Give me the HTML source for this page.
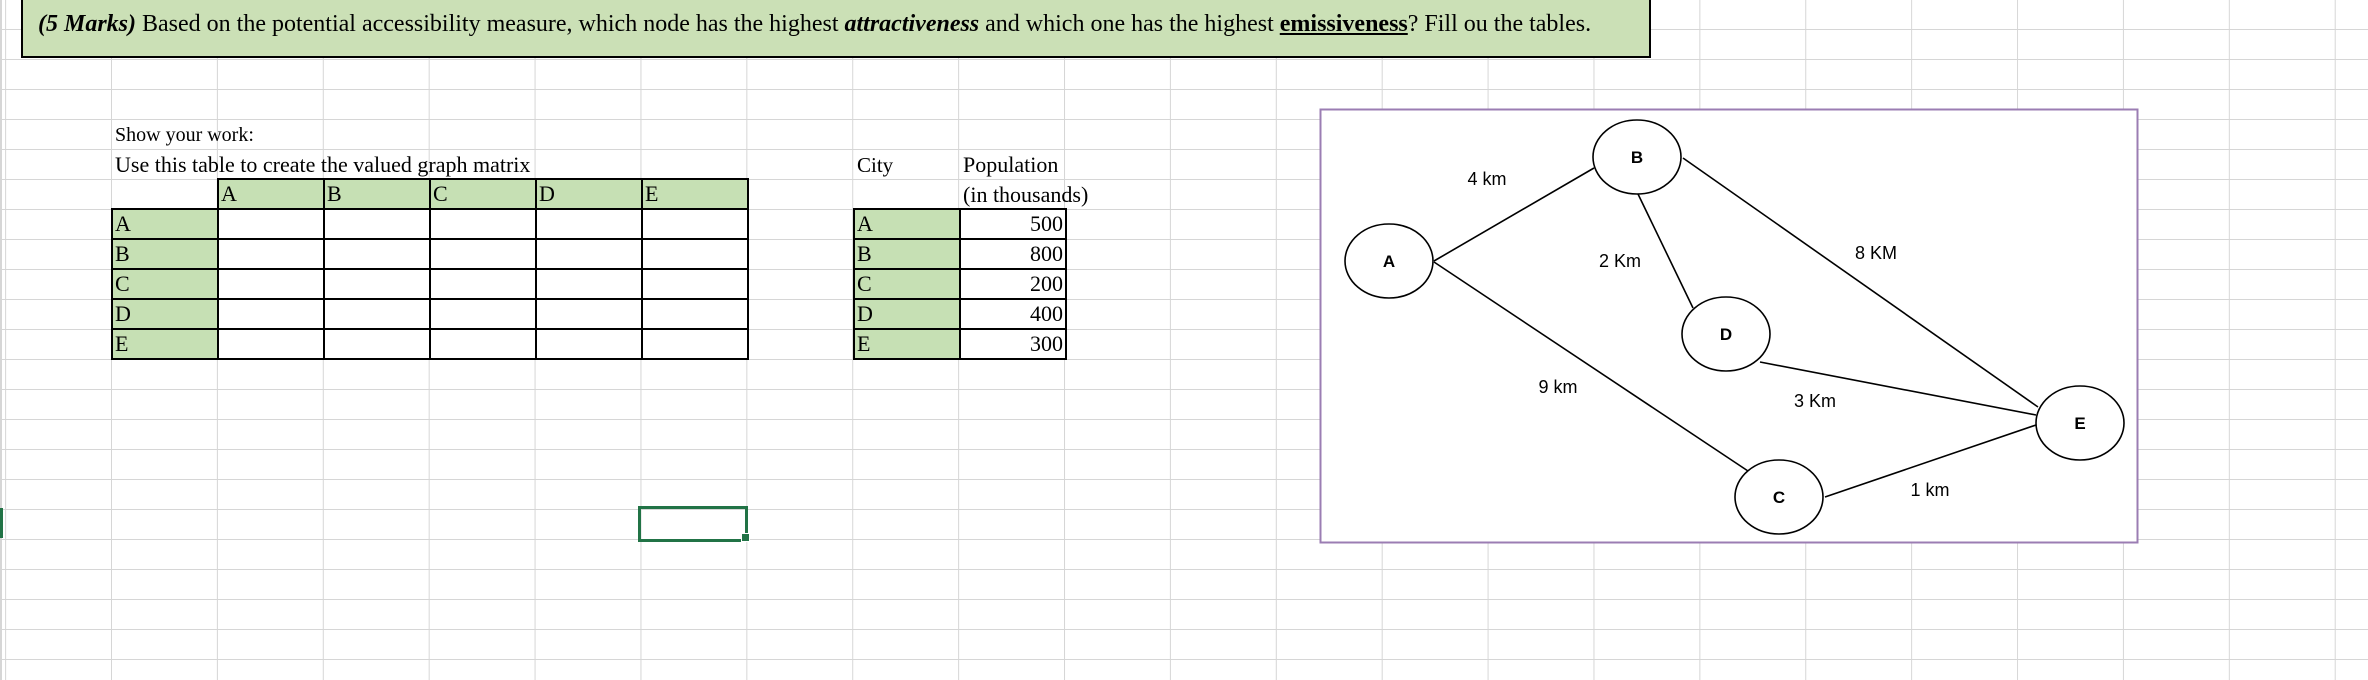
<!DOCTYPE html>
<html><head><meta charset="utf-8"><style>
html,body{margin:0;padding:0;}
body{width:2368px;height:680px;position:relative;overflow:hidden;background:#fff;
background-image:linear-gradient(to right,#d6d6d6 0 1px,transparent 1px),repeating-linear-gradient(to bottom,transparent 0 29px,#d6d6d6 29px 30px);
background-size:105.9px 100%,100% 100%;background-position:111px 0,0 0;
font-family:"Liberation Serif",serif;}
.a{position:absolute;}
.t{font-size:20px;line-height:30px;white-space:nowrap;}
table{position:absolute;border-collapse:collapse;table-layout:fixed;}
td{width:100px;height:28px;padding:0 2px;font-size:22px;line-height:28px;border:2px solid #000;background:#fff;vertical-align:bottom;overflow:hidden;white-space:nowrap;}
td.g{background:#c6e0b4;}
td.n{border:none;background:transparent;}
td.r{text-align:right;}
</style></head><body>
<div class="a" style="top:0;width:1626px;height:56px;background:#cbe0b6;border:2px solid #000;border-top:none;left:21px;"></div>
<div class="a" style="left:38px;top:9px;font-size:24px;line-height:30px;white-space:nowrap;"><b><i>(5 Marks)</i></b> Based on the potential accessibility measure, which node has the highest <b><i>attractiveness</i></b> and which one has the highest <b><u>emissiveness</u></b>? Fill ou the tables.</div>
<div class="a" style="left:0;top:0;width:2px;height:680px;background:#d6d6d6"></div>
<div class="a t" style="left:115px;top:120px;">Show your work:</div>
<div class="a t" style="left:115px;top:150px;font-size:22px;">Use this table to create the valued graph matrix</div>
<table style="left:111px;top:178px;">
<tr><td class="n"></td><td class="g">A</td><td class="g">B</td><td class="g">C</td><td class="g">D</td><td class="g">E</td></tr>
<tr><td class="g">A</td><td></td><td></td><td></td><td></td><td></td></tr>
<tr><td class="g">B</td><td></td><td></td><td></td><td></td><td></td></tr>
<tr><td class="g">C</td><td></td><td></td><td></td><td></td><td></td></tr>
<tr><td class="g">D</td><td></td><td></td><td></td><td></td><td></td></tr>
<tr><td class="g">E</td><td></td><td></td><td></td><td></td><td></td></tr>
</table>
<div class="a t" style="left:857px;top:150px;font-size:21px;">City</div>
<div class="a t" style="left:963px;top:150px;font-size:22px;">Population</div>
<div class="a t" style="left:963px;top:180px;font-size:22px;">(in thousands)</div>
<table style="left:853px;top:208px;">
<tr><td class="g">A</td><td class="r">500</td></tr>
<tr><td class="g">B</td><td class="r">800</td></tr>
<tr><td class="g">C</td><td class="r">200</td></tr>
<tr><td class="g">D</td><td class="r">400</td></tr>
<tr><td class="g">E</td><td class="r">300</td></tr>
</table>
<div class="a" style="left:638px;top:506px;height:30px;border:3px solid #217346;width:104px;"></div>
<div class="a" style="left:741px;top:533px;width:7px;height:7px;background:#217346;border:1px solid #fff;"></div>
<div class="a" style="left:0;top:508px;width:3px;height:30px;background:#217346;"></div>
<svg class="a" style="left:0;top:0" width="2368" height="680">
<rect x="1320.5" y="109.5" width="817" height="433" fill="#fff" stroke="#9b7db3" stroke-width="2"/>
<g stroke="#000" stroke-width="1.6" fill="none">
<line x1="1434" y1="261" x2="1594" y2="168"/>
<line x1="1638" y1="194" x2="1693" y2="308"/>
<line x1="1683" y1="158" x2="2038" y2="407"/>
<line x1="1434" y1="262" x2="1748" y2="471"/>
<line x1="1760" y1="362" x2="2036" y2="415"/>
<line x1="1825" y1="497" x2="2036" y2="425"/>
<ellipse cx="1389" cy="261" rx="44" ry="37" fill="#fff"/>
<ellipse cx="1637" cy="157" rx="44" ry="37" fill="#fff"/>
<ellipse cx="1726" cy="334" rx="44" ry="37" fill="#fff"/>
<ellipse cx="2080" cy="423" rx="44" ry="37" fill="#fff"/>
<ellipse cx="1779" cy="497" rx="44" ry="37" fill="#fff"/>
</g>
<g font-family="Liberation Sans, sans-serif" font-weight="bold" font-size="17" text-anchor="middle">
<text x="1389" y="267">A</text><text x="1637" y="163">B</text><text x="1726" y="340">D</text><text x="2080" y="429">E</text><text x="1779" y="503">C</text>
</g>
<g font-family="Liberation Sans, sans-serif" font-size="18" text-anchor="middle">
<text x="1487" y="185">4 km</text><text x="1620" y="267">2 Km</text><text x="1876" y="259">8 KM</text>
<text x="1558" y="393">9 km</text><text x="1815" y="407">3 Km</text><text x="1930" y="496">1 km</text>
</g>
</svg>
</body></html>
